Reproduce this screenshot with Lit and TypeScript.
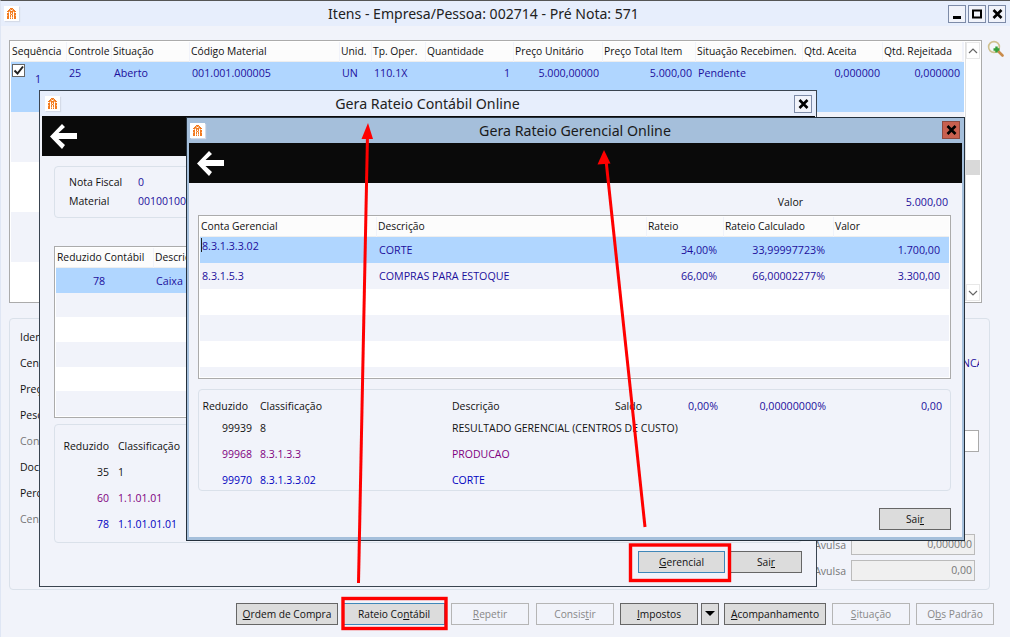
import { LitElement, html, css, svg } from "lit";
import { customElement } from "lit/decorators.js";

type Col = { t: string; w: number; r?: boolean; p?: number; c?: boolean };

const px = (cx: number, cy: number, f: string) => svg`<rect x="${cx}" y="${cy}" width="1" height="1" fill="${f}"/>`;
const logoMap = [
  "...OOO...",
  "..OoOoO..",
  ".OOo.oOO.",
  "OOoOOOoOO",
  ".o.OoO.o.",
  "OO.O.O.OO",
  "OO.oOo.OO",
  "oO.O.O.Oo",
  "OO.O.O.OO",
  "OO.o.o.OO",
  "OO.O.O.OO",
];
const logo = html`<svg class="logo" viewBox="-3 -2 15 15" width="15" height="15">
  <rect x="-3" y="-2" width="15" height="15" fill="#fff"/>
  ${logoMap.map((row, y) => [...row].map((ch, x) => (ch === "O" ? px(x, y, "#f37a1f") : ch === "o" ? px(x, y, "#f9b47c") : "")))}
</svg>`;

const backArrow = html`<svg class="back" viewBox="0 0 27 25" width="27" height="25">
  <path d="M12 0 L15 3 L8.5 9 L27 9 L27 15 L8.5 15 L15 21 L12 25 L0 12.5 Z" fill="#fff"/>
</svg>`;

const xIcon = svg`<path d="M1.5 1 L9.5 9 M9.5 1 L1.5 9" stroke="#000" stroke-width="2.6" fill="none"/>`;

function closeBtn(cls = "") {
  return html`<span class="wbtn ${cls}"><svg viewBox="0 0 11 10" width="11" height="10">${xIcon}</svg></span>`;
}

const tplOf = (cols: Col[]) => cols.map((c) => c.w + "px").join(" ");

function head(cols: Col[]) {
  return html`<div class="grid-head" style="grid-template-columns:${tplOf(cols)}">
    ${cols.map((c) => html`<div class="hc">${c.t}</div>`)}
  </div>`;
}

function cell(c: Col, t: unknown) {
  const st = c.p !== undefined ? `padding-right:${c.p}px` : "";
  return html`<div class="dc ${c.r ? "r" : ""} ${c.c ? "ctr" : ""}" style="${st}">${t}</div>`;
}

function grid(cols: Col[], rows: unknown[][], heights: number[]) {
  return html`${head(cols)}
    ${heights.map((h, i) => {
      const row = rows[i];
      const cls = i === 0 ? "sel" : i % 2 ? "alt" : "plain";
      return html`<div class="grow tall ${cls}" style="grid-template-columns:${tplOf(cols)};height:${h}px">
        ${row ? row.map((t, j) => cell(cols[j], t)) : ""}
      </div>`;
    })}`;
}

@customElement("app-root")
export class AppRoot extends LitElement {
  static styles = css`
    :host { display: block; width: 1010px; height: 637px; position: relative; overflow: hidden;
      font-family: "Open Sans", "Noto Sans", "DejaVu Sans", sans-serif; font-size: 10.5px; color: #111; background: #f1f3fa; }
    * { box-sizing: border-box; }
    .main { width: 1010px; height: 637px; border-top: 1px solid #555; display: flex; flex-direction: column; border-left: 1px solid #dfe6f4; }
    .tbar { height: 25px; flex: none; display: flex; align-items: center; position: relative; background: #e7eefc; padding-left: 3px; }
    .tbar .ttl { position: absolute; left: 0; right: 0; text-align: center; font-family: "Noto Sans", sans-serif; font-size: 14.05px; color: #222; white-space: nowrap; }
    .logo { flex: none; position: relative; z-index: 1; box-shadow: 1px 1px 1px #d5dbe8; }
    .wbtns { margin-left: auto; display: flex; gap: 2px; margin-right: 4px; position: relative; z-index: 1; }
    .wbtn { width: 18px; height: 18px; border: 1px solid #7d8ba8; background: #f1f3fa; display: flex; align-items: center; justify-content: center; }
    .wbtn.red { background: #c8604f; border-color: #8e4a40; }
    .mbody { flex: 1; padding: 14px 0 0 8px; display: flex; flex-direction: column; }
    .toprow { display: flex; align-items: flex-start; gap: 5px; }
    .gframe { border: 1px solid #ababab; background: #fff; padding: 1px; display: flex; flex-direction: column; overflow: hidden; }
    .mainframe { width: 973px; height: 263px; flex-direction: row; flex: none; }
    .mgrid { width: 953px; flex: none; }
    .sbar { flex: 1; margin-left: 1px; display: flex; flex-direction: column; border-left: 1px solid #e0e0e0; background: #fff; }
    .sb-btn { height: 17px; display: flex; align-items: center; justify-content: center; flex: none; border: 1px solid #e8e8e8; }
    .sb-space { height: 101px; flex: none; }
    .sb-thumb { height: 15px; background: #d9d9d9; flex: none; }
    .sb-rest { flex: 1; }
    .grid-head { display: grid; height: 20px; background: #f1f3fa; }
    .hc { background: #fcfcfc; margin-right: 1.5px; padding-left: 1px; line-height: 19px; font-size: 10.3px; white-space: nowrap; overflow: hidden; color: #111; border-bottom: 1px solid #eee; }
    .grow { display: grid; overflow: hidden; }
    .grow.sel { background: #b0d6ff; }
    .grow.alt { background: #f1f3fa; }
    .grow.plain { background: #fff; }
    .dc { color: #1c0f9c; font-size: 10.7px; line-height: 18px; padding: 2px 2px 0 2px; white-space: nowrap; }
    .grow.tall .dc { line-height: 26px; padding-top: 0; }
    .dc.r { text-align: right; padding-right: 3px; }
    .dc.ctr { text-align: center; padding-right: 14px; }
    .caretcell { display: inline-block; position: relative; line-height: 18px; vertical-align: top; }
    .caret { position: absolute; left: -1px; top: 1px; width: 1px; height: 14px; background: #222; }
    .seq { position: relative; }
    .chk { position: absolute; left: 1px; top: 2px; width: 13px; height: 13px; border: 1px solid #666; background: #fff; display: flex; align-items: center; justify-content: center; }
    .seqn { position: absolute; left: 24px; top: 8px; }
    .lower { margin-top: 15px; width: 981px; height: 272px; border: 1px solid #dae1ea; border-radius: 4px; display: flex; justify-content: space-between; padding: 9px 4px 0 10px; }
    .labels { display: flex; flex-direction: column; }
    .labels span { height: 26px; line-height: 18px; white-space: nowrap; }
    .muted { color: #777; }
    .rcol { display: flex; flex-direction: column; align-items: flex-end; }
    .nca { color: #1c0f9c; margin-top: 26px; margin-right: 6px; height: 18px; line-height: 18px; overflow: hidden; width: 17px; white-space: nowrap; }
    .whitein { margin-top: 58px; width: 60px; height: 22px; background: #fff; border: 1px solid #aaa; margin-right: 6px; border-left: none; }
    .av { display: flex; align-items: center; gap: 5px; color: #777; margin-right: 10px; height: 21px; }
    .av1 { margin-top: 82px; }
    .av2 { margin-top: 5px; }
    .av b { font-weight: normal; width: 124px; height: 21px; border: 1px solid #bbb; background: #f0f0f0; text-align: right; padding-right: 2px; line-height: 19px; color: #777; }
    .btns { display: flex; margin-top: 13px; height: 22px; padding-left: 227px; }
    .btn { height: 22px; border: 1px solid #666; background: #dcdcdc; display: flex; align-items: center; justify-content: center; white-space: nowrap; color: #111; flex: none; font-size: 10.2px; }
    .btn.off { background: #f1f3fa; border-color: #b5b5b5; color: #888; }
    .btn.focus { border-color: #3f87b8; }
    .win { position: absolute; display: flex; flex-direction: column; border: 1px solid #3a4450; background: #f1f3fa; }
    .w2 { left: 39px; top: 90px; width: 778px; height: 497px; }
    .w3 { left: 186px; top: 117px; width: 779px; height: 424px; border-color: #24303c; box-shadow: inset 2px 0 #a5bfdb, inset -2px 0 #a5bfdb, inset 0 -3px #a5bfdb; }
    .w2 .tbar { padding-left: 5px; }
    .w3 .tbar { background: #a5bfdb; padding-left: 3px; }
    .w3 .ttl { color: #1a1a1a; }
    .w2 .tbar .ttl, .w3 .tbar .ttl { font-size: 14.2px; padding-right: 1px; }
    .w3 .wbtns { margin-top: -1px; }
    .black { height: 40px; flex: none; background: #0a0a0a; display: flex; align-items: center; padding-left: 8px; }
    .w2 .black { margin: 0 1px 0 2px; }
    .w3 .black { margin: 0 2px; }
    .w3body { flex: 1; margin: 0 2px 2px; display: flex; flex-direction: column; padding: 0 11px 0 9px; }
    .valor { display: flex; justify-content: flex-end; height: 18px; margin-top: 10px; margin-bottom: 4px; line-height: 18px; }
    .valor .v { width: 148px; text-align: right; color: #1c0f9c; padding-right: 3px; font-size: 10.7px; }
    .g3 { height: 164px; width: 753px; flex: none; }
    .gbox { border: 1px solid #dae1ea; border-radius: 4px; flex: none; }
    .g3box { margin-top: 10px; width: 753px; height: 102px; padding-top: 7px; }
    .srow { display: grid; height: 26px; line-height: 18px; white-space: nowrap; grid-template-columns: 53px 200px 163px 34px 69px 108px 116px; }
    .srow.hdr { height: 22px; }
    .srow > div { white-space: nowrap; }
    .srow .a { text-align: right; }
    .srow .b { padding-left: 8px; }
    .srow .hr { padding-right: 4px; }
    .srow .n { color: #1c0f9c; font-size: 10.7px; }
    .srow.k { color: #111; }
    .srow.p { color: #800080; }
    .srow.u { color: #0000c0; }
    .saira { display: flex; justify-content: flex-end; margin-top: 17px; }
    .w2body { flex: 1; padding: 10px 14px 0 14px; display: flex; flex-direction: column; }
    .g2a { height: 52px; padding: 6px 14px; display: flex; flex-direction: column; }
    .g2a div { display: flex; height: 20px; line-height: 18px; white-space: nowrap; }
    .g2a span { width: 69px; }
    .g2a em { font-style: normal; color: #1c0f9c; }
    .g2g { margin-top: 28px; height: 172px; width: 748px; flex: none; }
    .g2box { margin-top: 6px; width: 748px; height: 119px; padding-top: 12px; }
    .srow2 { display: grid; height: 26px; line-height: 18px; grid-template-columns: 54px 300px; white-space: nowrap; }
    .srow2 .a { text-align: right; }
    .srow2 .b { padding-left: 9px; }
    .srow2.p { color: #800080; }
    .srow2.u { color: #0000c0; }
    .b2row { display: flex; justify-content: flex-end; gap: 5px; margin-top: 8px; }
    .overlay { position: absolute; left: 0; top: 0; pointer-events: none; }
    u { text-underline-offset: 1px; }
  `;

  render() {
    const mainCols: Col[] = [
      { t: "Sequência", w: 56 }, { t: "Controle", w: 45 }, { t: "Situação", w: 78, p: 0 },
      { t: "Código Material", w: 150 }, { t: "Unid.", w: 32 }, { t: "Tp. Oper.", w: 54 },
      { t: "Quantidade", w: 88, r: true, p: 4 }, { t: "Preço Unitário", w: 89, r: true, p: 4 },
      { t: "Preço Total Item", w: 93, r: true, p: 4 }, { t: "Situação Recebimen.", w: 107 },
      { t: "Qtd. Aceita", w: 80, r: true }, { t: "Qtd. Rejeitada", w: 80, r: true },
    ];
    const g3Cols: Col[] = [
      { t: "Conta Gerencial", w: 177 }, { t: "Descrição", w: 270 }, { t: "Rateio", w: 77, r: true, p: 7 },
      { t: "Rateio Calculado", w: 110, r: true, p: 9 }, { t: "Valor", w: 116, r: true, p: 10 },
    ];
    const g2Cols: Col[] = [
      { t: "Reduzido Contábil", w: 98, c: true }, { t: "Descrição", w: 300 }, { t: "", w: 348 },
    ];
    const mainRow = ["25", "Aberto", "001.001.000005", "UN", "110.1X", "1", "5.000,00000", "5.000,00", "Pendente", "0,000000", "0,000000"];
    return html`
      <div class="main">
        <div class="tbar">
          ${logo}
          <div class="ttl" style="padding-right:44px">Itens - Empresa/Pessoa: 002714 - Pré Nota: 571</div>
          <div class="wbtns">
            <span class="wbtn"><svg viewBox="0 0 10 10" width="10" height="10"><rect x="1" y="7" width="8" height="3"/></svg></span>
            <span class="wbtn"><svg viewBox="0 0 10 10" width="10" height="10"><path d="M1 1.5H9V8.5H1Z" fill="none" stroke="#000" stroke-width="2"/></svg></span>
            ${closeBtn()}
          </div>
        </div>
        <div class="mbody">
          <div class="toprow">
            <div class="gframe mainframe">
              <div class="mgrid">
                ${head(mainCols)}
                <div class="grow sel" style="grid-template-columns:${tplOf(mainCols)};height:50px">
                  <div class="dc seq"><span class="chk"><svg viewBox="0 0 11 11" width="11" height="11"><path d="M1.5 5.5L4.5 8.5L10 1.5" stroke="#222" stroke-width="2" fill="none"/></svg></span><span class="seqn">1</span></div>
                  ${mainRow.map((t, i) => cell(mainCols[i + 1], t))}
                </div>
                ${[50, 50, 50, 50].map((h, i) => html`<div class="grow ${i % 2 ? "plain" : "alt"}" style="height:${h}px"></div>`)}
              </div>
              <div class="sbar">
                <div class="sb-btn"><svg viewBox="0 0 10 6" width="10" height="6"><path d="M1 5L5 1L9 5" fill="none" stroke="#666" stroke-width="1.2"/></svg></div>
                <div class="sb-space"></div><div class="sb-thumb"></div><div class="sb-rest"></div>
                <div class="sb-btn"><svg viewBox="0 0 10 6" width="10" height="6"><path d="M1 1L5 5L9 1" fill="none" stroke="#666" stroke-width="1.2"/></svg></div>
              </div>
            </div>
            <svg viewBox="0 0 17 17" width="17" height="17" style="flex:none">
              <circle cx="7" cy="7" r="5.4" fill="#f4f8fa" stroke="#cfc08e" stroke-width="1.6"/>
              <path d="M11.5 11.5L15.5 15.5" stroke="#c98b4b" stroke-width="2.6" stroke-linecap="round"/>
              <path d="M6.5 9.5H12.5M9.5 6.5V12.5" stroke="#34a038" stroke-width="2.4"/>
            </svg>
          </div>
          <div class="lower">
            <div class="labels">
              <span>Identificação</span><span>Centro</span><span>Preço</span><span>Peso</span>
              <span class="muted">Conta</span><span>Documento</span><span>Percentual</span><span class="muted">Centro</span>
            </div>
            <div class="rcol">
              <div class="nca">NCA</div>
              <div class="whitein"></div>
              <div class="av av1"><span>Avulsa</span><b>0,000000</b></div>
              <div class="av av2"><span>Avulsa</span><b>0,00</b></div>
            </div>
          </div>
          <div class="btns">
            <div class="btn" style="width:102px"><span><u>O</u>rdem de Compra</span></div>
            <div class="btn focus" style="width:102px;margin-left:5px"><span>Rateio Co<u>n</u>tábil</span></div>
            <div class="btn off" style="width:78px;margin-left:6px"><span><u>R</u>epetir</span></div>
            <div class="btn off" style="width:78px;margin-left:7px"><span>Consis<u>t</u>ir</span></div>
            <div class="btn" style="width:78px;margin-left:6px"><span><u>I</u>mpostos</span></div>
            <div class="btn" style="width:18px;margin-left:3px"><svg viewBox="0 0 10 6" width="10" height="6"><path d="M0 0H10L5 5Z"/></svg></div>
            <div class="btn" style="width:102px;margin-left:5px"><span><u>A</u>companhamento</span></div>
            <div class="btn off" style="width:78px;margin-left:6px"><span><u>S</u>ituação</span></div>
            <div class="btn off" style="width:78px;margin-left:6px"><span>O<u>b</u>s Padrão</span></div>
          </div>
        </div>
      </div>

      <div class="win w2">
        <div class="tbar">${logo}<div class="ttl">Gera Rateio Contábil Online</div><div class="wbtns">${closeBtn()}</div></div>
        <div class="black">${backArrow}</div>
        <div class="w2body">
          <div class="gbox g2a">
            <div><span>Nota Fiscal</span><em>0</em></div>
            <div><span>Material</span><em>00100100005</em></div>
          </div>
          <div class="gframe g2g">
            ${grid(g2Cols, [["78", "Caixa", ""]], [26, 26, 26, 26, 26, 26])}
          </div>
          <div class="gbox g2box">
            <div class="srow2"><div class="a">Reduzido</div><div class="b">Classificação</div></div>
            <div class="srow2"><div class="a">35</div><div class="b">1</div></div>
            <div class="srow2 p"><div class="a">60</div><div class="b">1.1.01.01</div></div>
            <div class="srow2 u"><div class="a">78</div><div class="b">1.1.01.01.01</div></div>
          </div>
          <div class="b2row">
            <div class="btn focus" style="width:87px"><span><u>G</u>erencial</span></div>
            <div class="btn" style="width:72px"><span>Sai<u>r</u></span></div>
          </div>
        </div>
      </div>

      <div class="win w3">
        <div class="tbar">${logo}<div class="ttl">Gera Rateio Gerencial Online</div><div class="wbtns">${closeBtn("red")}</div></div>
        <div class="black">${backArrow}</div>
        <div class="w3body">
          <div class="valor"><span>Valor</span><span class="v">5.000,00</span></div>
          <div class="gframe g3">
            ${grid(
              g3Cols,
              [
                [html`<span class="caretcell"><i class="caret"></i>8.3.1.3.3.02</span>`, "CORTE", "34,00%", "33,99997723%", "1.700,00"],
                ["8.3.1.5.3", "COMPRAS PARA ESTOQUE", "66,00%", "66,00002277%", "3.300,00"],
              ],
              [26, 26, 26, 26, 26, 10]
            )}
          </div>
          <div class="gbox g3box">
            <div class="srow hdr">
              <div class="a hr">Reduzido</div><div class="b">Classificação</div><div>Descrição</div>
              <div>Saldo</div><div class="a n">0,00%</div><div class="a n">0,00000000%</div><div class="a n">0,00</div>
            </div>
            <div class="srow k"><div class="a">99939</div><div class="b">8</div><div>RESULTADO GERENCIAL (CENTROS DE CUSTO)</div></div>
            <div class="srow p"><div class="a">99968</div><div class="b">8.3.1.3.3</div><div>PRODUCAO</div></div>
            <div class="srow u"><div class="a">99970</div><div class="b">8.3.1.3.3.02</div><div>CORTE</div></div>
          </div>
          <div class="saira"><div class="btn" style="width:72px"><span>Sai<u>r</u></span></div></div>
        </div>
      </div>

      <svg class="overlay" width="1010" height="637" viewBox="0 0 1010 637">
        <g fill="none" stroke="#f00" stroke-width="3">
          <path d="M358.5 583L367.5 135"/>
          <path d="M645 527L606 160"/>
        </g>
        <g fill="#f00">
          <path d="M368 123L373 139H361.5Z"/>
          <path d="M604 150L610.5 163.5L597.5 164.5Z"/>
        </g>
        <g fill="none" stroke="#f00" stroke-width="3.4">
          <rect x="343" y="598.5" width="103" height="30"/>
          <rect x="630.5" y="545" width="99" height="35.5"/>
        </g>
      </svg>
    `;
  }
}
